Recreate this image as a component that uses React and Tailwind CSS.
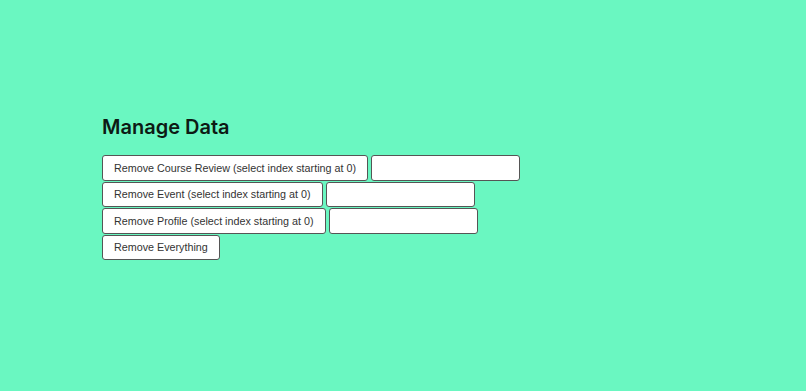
import React from 'react';

const rows = [
  'Remove Course Review (select index starting at 0)',
  'Remove Event (select index starting at 0)',
  'Remove Profile (select index starting at 0)',
];

const App = () => {
  return (
    <div className="min-h-[391px] w-full bg-[#6af7c1] pl-[102px] pt-[114px] font-['Liberation_Sans',Arial,sans-serif] text-[#222]">
      {/* Header */}
      <h1 className="mb-[15px] font-['Inter',sans-serif] text-[20px] font-semibold leading-[26px] text-[#0d1a14]">Manage Data</h1>

      <div className="flex flex-col items-start gap-px">
        {rows.map((label) => (
          <div key={label} className="flex items-center gap-[3px]">
            <button className="h-[25.5px] rounded-[3px] border border-[#555] bg-white px-[11px] text-[10.75px] text-[#333]">
              {label}
            </button>
            <input className="h-[25.5px] w-[149px] rounded-[3px] border border-[#555] bg-white" />
          </div>
        ))}
        <button className="h-[25.5px] rounded-[3px] border border-[#555] bg-white px-[11px] text-[10.75px] text-[#333]">
          Remove Everything
        </button>
      </div>
    </div>
  );
};

export default App;
